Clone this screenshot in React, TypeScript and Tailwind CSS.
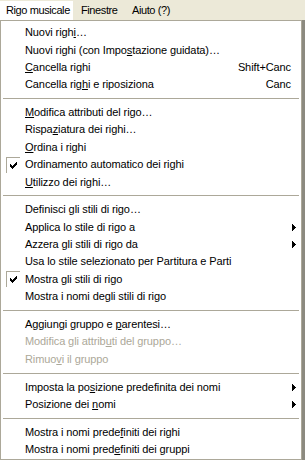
import React from 'react';

type Item =
  | { sep: true }
  | {
      sep?: false;
      label: string;
      mn?: number; // index of the underlined mnemonic letter
      shortcut?: string;
      sub?: boolean;
      checked?: boolean;
      disabled?: boolean;
    };

const items: Item[] = [
  { label: 'Nuovi righi…', mn: 10 },
  { label: 'Nuovi righi (con Impostazione guidata)…', mn: 21 },
  { label: 'Cancella righi', mn: 0, shortcut: 'Shift+Canc' },
  { label: 'Cancella righi e riposiziona', mn: 12, shortcut: 'Canc' },
  { sep: true },
  { label: 'Modifica attributi del rigo…', mn: 0 },
  { label: 'Rispaziatura dei righi…', mn: 5 },
  { label: 'Ordina i righi', mn: 0 },
  { label: 'Ordinamento automatico dei righi', checked: true },
  { label: 'Utilizzo dei righi…', mn: 0 },
  { sep: true },
  { label: 'Definisci gli stili di rigo…' },
  { label: 'Applica lo stile di rigo a', sub: true },
  { label: 'Azzera gli stili di rigo da', sub: true },
  { label: 'Usa lo stile selezionato per Partitura e Parti' },
  { label: 'Mostra gli stili di rigo', checked: true },
  { label: 'Mostra i nomi degli stili di rigo' },
  { sep: true },
  { label: 'Aggiungi gruppo e parentesi…', mn: 18 },
  { label: 'Modifica gli attributi del gruppo…', disabled: true, mn: 19 },
  { label: 'Rimuovi il gruppo', disabled: true, mn: 5 },
  { sep: true },
  { label: 'Imposta la posizione predefinita dei nomi', sub: true, mn: 13 },
  { label: 'Posizione dei nomi', sub: true, mn: 14 },
  { sep: true },
  { label: 'Mostra i nomi predefiniti dei righi', mn: 19 },
  { label: 'Mostra i nomi predefiniti dei gruppi', mn: 18 },
];

function Check() {
  // classic 7x7 bitmap tick
  const rows: [number, number, number][] = [
    [6, 0, 1],
    [5, 1, 2],
    [0, 2, 1],
    [4, 2, 3],
    [0, 3, 2],
    [3, 3, 3],
    [0, 4, 5],
    [1, 5, 3],
    [2, 6, 1],
  ];
  return (
    <svg width="7" height="7" viewBox="0 0 7 7" shapeRendering="crispEdges">
      {rows.map(([x, y, w], i) => (
        <rect key={i} x={x} y={y} width={w} height={1} fill="#000" />
      ))}
    </svg>
  );
}

function Label({ text, mn }: { text: string; mn?: number }) {
  if (mn === undefined) return <>{text}</>;
  return (
    <>
      {text.slice(0, mn)}
      <u className="underline underline-offset-[1px]">{text[mn]}</u>
      {text.slice(mn + 1)}
    </>
  );
}

export default function App() {
  return (
    <div className="w-[305px] h-[460px] overflow-hidden bg-[#ece9d8] text-[11px] leading-none tracking-[-0.1px] text-black font-['Liberation_Sans',Arial,sans-serif]">
      {/* menu bar */}
      <div className="flex h-[20px] items-stretch pt-[1px] whitespace-nowrap tracking-[-0.4px]">
        <div className="flex items-center bg-white pl-[6px] w-[73px] h-[19px]">Rigo musicale</div>
        <div className="flex items-center pl-[8px] w-[59px]">Finestre</div>
        <div className="flex items-center">Aiuto (?)</div>
      </div>

      {/* dropdown */}
      <div className="flex w-[305px]">
        <div className="w-[302px] bg-white border border-[#aca899] pt-[3px] flex flex-col">
          {items.map((it, i) =>
            it.sep ? (
              <div key={i} className="h-[10.6px] flex items-center px-[2px]">
                <div className="h-px w-full bg-[#aca899]" />
              </div>
            ) : (
              <div
                key={i}
                className={`h-[17.35px] flex items-center ${it.disabled ? 'text-[#aca899]' : ''}`}
              >
                <div className="w-[24px] h-full flex items-center pl-[5px]">
                  {it.checked && (
                    <div className="w-[14px] h-[16px] border-l border-t border-[#aca899] flex items-center justify-center">
                      <Check />
                    </div>
                  )}
                </div>
                <div className="flex-1 whitespace-nowrap">
                  <Label text={it.label} mn={it.mn} />
                </div>
                {it.shortcut && <div className="whitespace-nowrap">{it.shortcut}</div>}
                <div className="w-[10px] flex items-center pl-[1px]">
                  {it.sub && (
                    <svg width="4" height="7" viewBox="0 0 4 7" shapeRendering="crispEdges">
                      <path d="M0 0H1V7H0ZM1 1H2V6H1ZM2 2H3V5H2ZM3 3H4V4H3Z" fill="#000" />
                    </svg>
                  )}
                </div>
              </div>
            )
          )}
        </div>
        <div className="w-[3px] bg-[#8c8a80]" />
      </div>
    </div>
  );
}
